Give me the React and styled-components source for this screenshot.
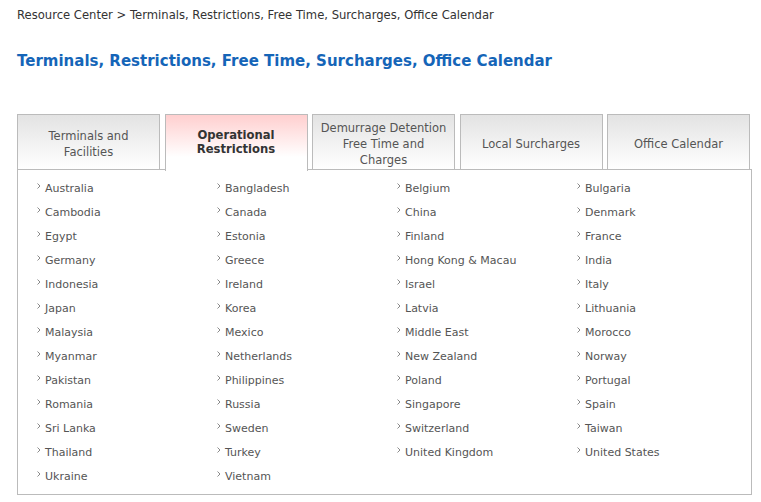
import React from 'react'
import styled, { createGlobalStyle } from 'styled-components'

const GlobalStyle = createGlobalStyle`
  body {
    margin: 0;
    background: #fff;
    font-family: Verdana, "DejaVu Sans", sans-serif;
  }
`

const tabs = [
  { lines: ['Terminals and', 'Facilities'], active: false },
  { lines: ['Operational', 'Restrictions'], active: true },
  { lines: ['Demurrage Detention', 'Free Time and', 'Charges'], active: false },
  { lines: ['Local Surcharges'], active: false },
  { lines: ['Office Calendar'], active: false },
]

const countries = [
  'Australia', 'Bangladesh', 'Belgium', 'Bulgaria',
  'Cambodia', 'Canada', 'China', 'Denmark',
  'Egypt', 'Estonia', 'Finland', 'France',
  'Germany', 'Greece', 'Hong Kong & Macau', 'India',
  'Indonesia', 'Ireland', 'Israel', 'Italy',
  'Japan', 'Korea', 'Latvia', 'Lithuania',
  'Malaysia', 'Mexico', 'Middle East', 'Morocco',
  'Myanmar', 'Netherlands', 'New Zealand', 'Norway',
  'Pakistan', 'Philippines', 'Poland', 'Portugal',
  'Romania', 'Russia', 'Singapore', 'Spain',
  'Sri Lanka', 'Sweden', 'Switzerland', 'Taiwan',
  'Thailand', 'Turkey', 'United Kingdom', 'United States',
  'Ukraine', 'Vietnam',
]

function Arrow() {
  return (
    <svg width="4" height="6" viewBox="0 0 4 6">
      <polyline points="0.5,0.5 3,3 0.5,5.5" fill="none" stroke="#8a8a8a" strokeWidth="1" />
    </svg>
  )
}

export default function App() {
  return (
    <Page>
      <GlobalStyle />
      <Breadcrumb>Resource Center &gt; Terminals, Restrictions, Free Time, Surcharges, Office Calendar</Breadcrumb>
      <Title>Terminals, Restrictions, Free Time, Surcharges, Office Calendar</Title>

      <TabBar>
        {tabs.map((t) => (
          <Tab key={t.lines.join(' ')} $active={t.active}>
            <span>
              {t.lines.map((l, i) => (
                <React.Fragment key={l}>
                  {i > 0 && <br />}
                  {l}
                </React.Fragment>
              ))}
            </span>
          </Tab>
        ))}
      </TabBar>

      <Panel>
        {countries.map((c) => (
          <Item key={c}>
            <Bullet><Arrow /></Bullet>
            {c}
          </Item>
        ))}
      </Panel>
    </Page>
  )
}

const Page = styled.div`
  padding: 8px 10px 0 17px;
  width: 735px;
`

const Breadcrumb = styled.div`
  font-size: 11.6px;
  color: #333;
  line-height: 15px;
`

const Title = styled.h1`
  margin: 28px 0 0;
  font-size: 15px;
  line-height: 20px;
  font-weight: bold;
  color: #1565b8;
`

const TabBar = styled.div`
  display: grid;
  grid-template-columns: repeat(5, 143px);
  column-gap: 4.5px;
  margin-top: 43px;
  position: relative;
  z-index: 1;
`

const Tab = styled.div`
  height: ${(p) => (p.$active ? '57px' : '56px')};
  box-sizing: border-box;
  border: 1px solid #bbb;
  border-bottom: ${(p) => (p.$active ? 'none' : '1px solid #bbb')};
  background: ${(p) =>
    p.$active
      ? 'linear-gradient(to bottom, #ffcfcf 0%, #fff 75%)'
      : 'linear-gradient(to bottom, #e3e3e3 0%, #fff 100%)'};
  display: flex;
  align-items: center;
  justify-content: center;
  text-align: center;
  padding: ${(p) => (p.$active ? '0 4px 2px' : '3px 4px 0')};
  font-size: ${(p) => (p.$active ? '11.6px' : '11.5px')};
  line-height: 16px;
  color: ${(p) => (p.$active ? '#333' : '#555')};
  font-weight: ${(p) => (p.$active ? 'bold' : 'normal')};
  margin-bottom: ${(p) => (p.$active ? '-1px' : '0')};

  span {
    line-height: ${(p) => (p.$active ? '14px' : '16px')};
  }
`

const Panel = styled.div`
  margin-top: -1px;
  border: 1px solid #bbb;
  width: 735px;
  box-sizing: border-box;
  padding: 6px 0 6px 18px;
  display: grid;
  grid-template-columns: repeat(4, 180px);
  grid-auto-rows: 24px;
`

const Item = styled.div`
  display: flex;
  align-items: center;
  font-size: 11px;
  color: #555;
  white-space: nowrap;
`

const Bullet = styled.span`
  display: inline-flex;
  width: 8px;
  margin-top: -4px;
  padding-left: 1px;
`
